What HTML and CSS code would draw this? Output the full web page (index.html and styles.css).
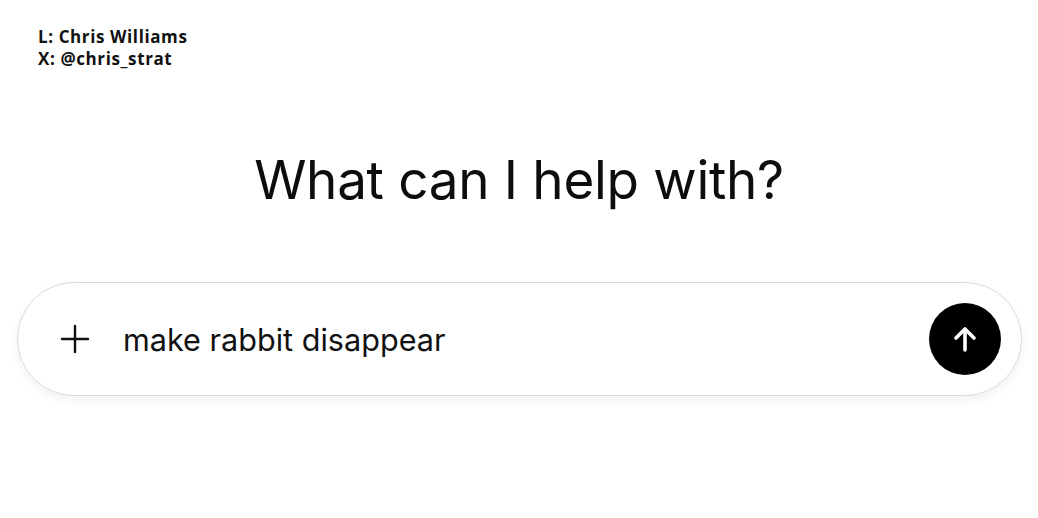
FILE: index.html
```html
<!DOCTYPE html>
<html>
<head>
<meta charset="utf-8">
<link rel="stylesheet" href="styles.css">
</head>
<body>
<div class="credit">
  <div>L: Chris Williams</div>
  <div>X: @chris_strat</div>
</div>
<h1 class="title">What can I help with?</h1>
<div class="composer">
  <span class="plus">
    <svg width="30" height="30" viewBox="0 0 30 30"><path d="M15 2V28M2 15H28" stroke="#111" stroke-width="2.4" stroke-linecap="round" fill="none"/></svg>
  </span>
  <span class="prompt">make rabbit disappear</span>
  <span class="send">
    <svg width="30" height="30" viewBox="0 0 30 30"><path d="M15 26V5M6 14L15 5L24 14" stroke="#fff" stroke-width="3.6" stroke-linecap="round" stroke-linejoin="round" fill="none"/></svg>
  </span>
</div>
</body>
</html>
```
FILE: styles.css
```css
html, body {
  margin: 0;
  padding: 0;
  background: #fff;
}
body {
  width: 1038px;
  height: 518px;
  overflow: hidden;
  font-family: Inter, "Liberation Sans", sans-serif;
  color: #0d0d0d;
}
.credit {
  padding: 26px 0 0 38px;
  font-family: "Open Sans", sans-serif;
  font-weight: 700;
  font-size: 17px;
  line-height: 22px;
  letter-spacing: 0.6px;
  color: #111;
}
.title {
  margin: 78px 0 0;
  text-align: center;
  font-weight: 400;
  font-size: 53px;
  line-height: 64px;
  letter-spacing: -0.3px;
}
.composer {
  margin: 70px 16px 0 17px;
  height: 112px;
  border: 1px solid #d9d9d9;
  border-radius: 57px;
  box-shadow: 0 4px 10px rgba(0,0,0,0.06);
  display: flex;
  align-items: center;
  padding: 0 20px 0 42px;
}
.plus {
  width: 30px;
  height: 30px;
  display: flex;
}
.prompt {
  margin-left: 33px;
  font-size: 30.6px;
  flex: 1;
  color: #111;
}
.send {
  width: 72px;
  height: 72px;
  border-radius: 50%;
  background: #000;
  display: flex;
  align-items: center;
  justify-content: center;
}
```
